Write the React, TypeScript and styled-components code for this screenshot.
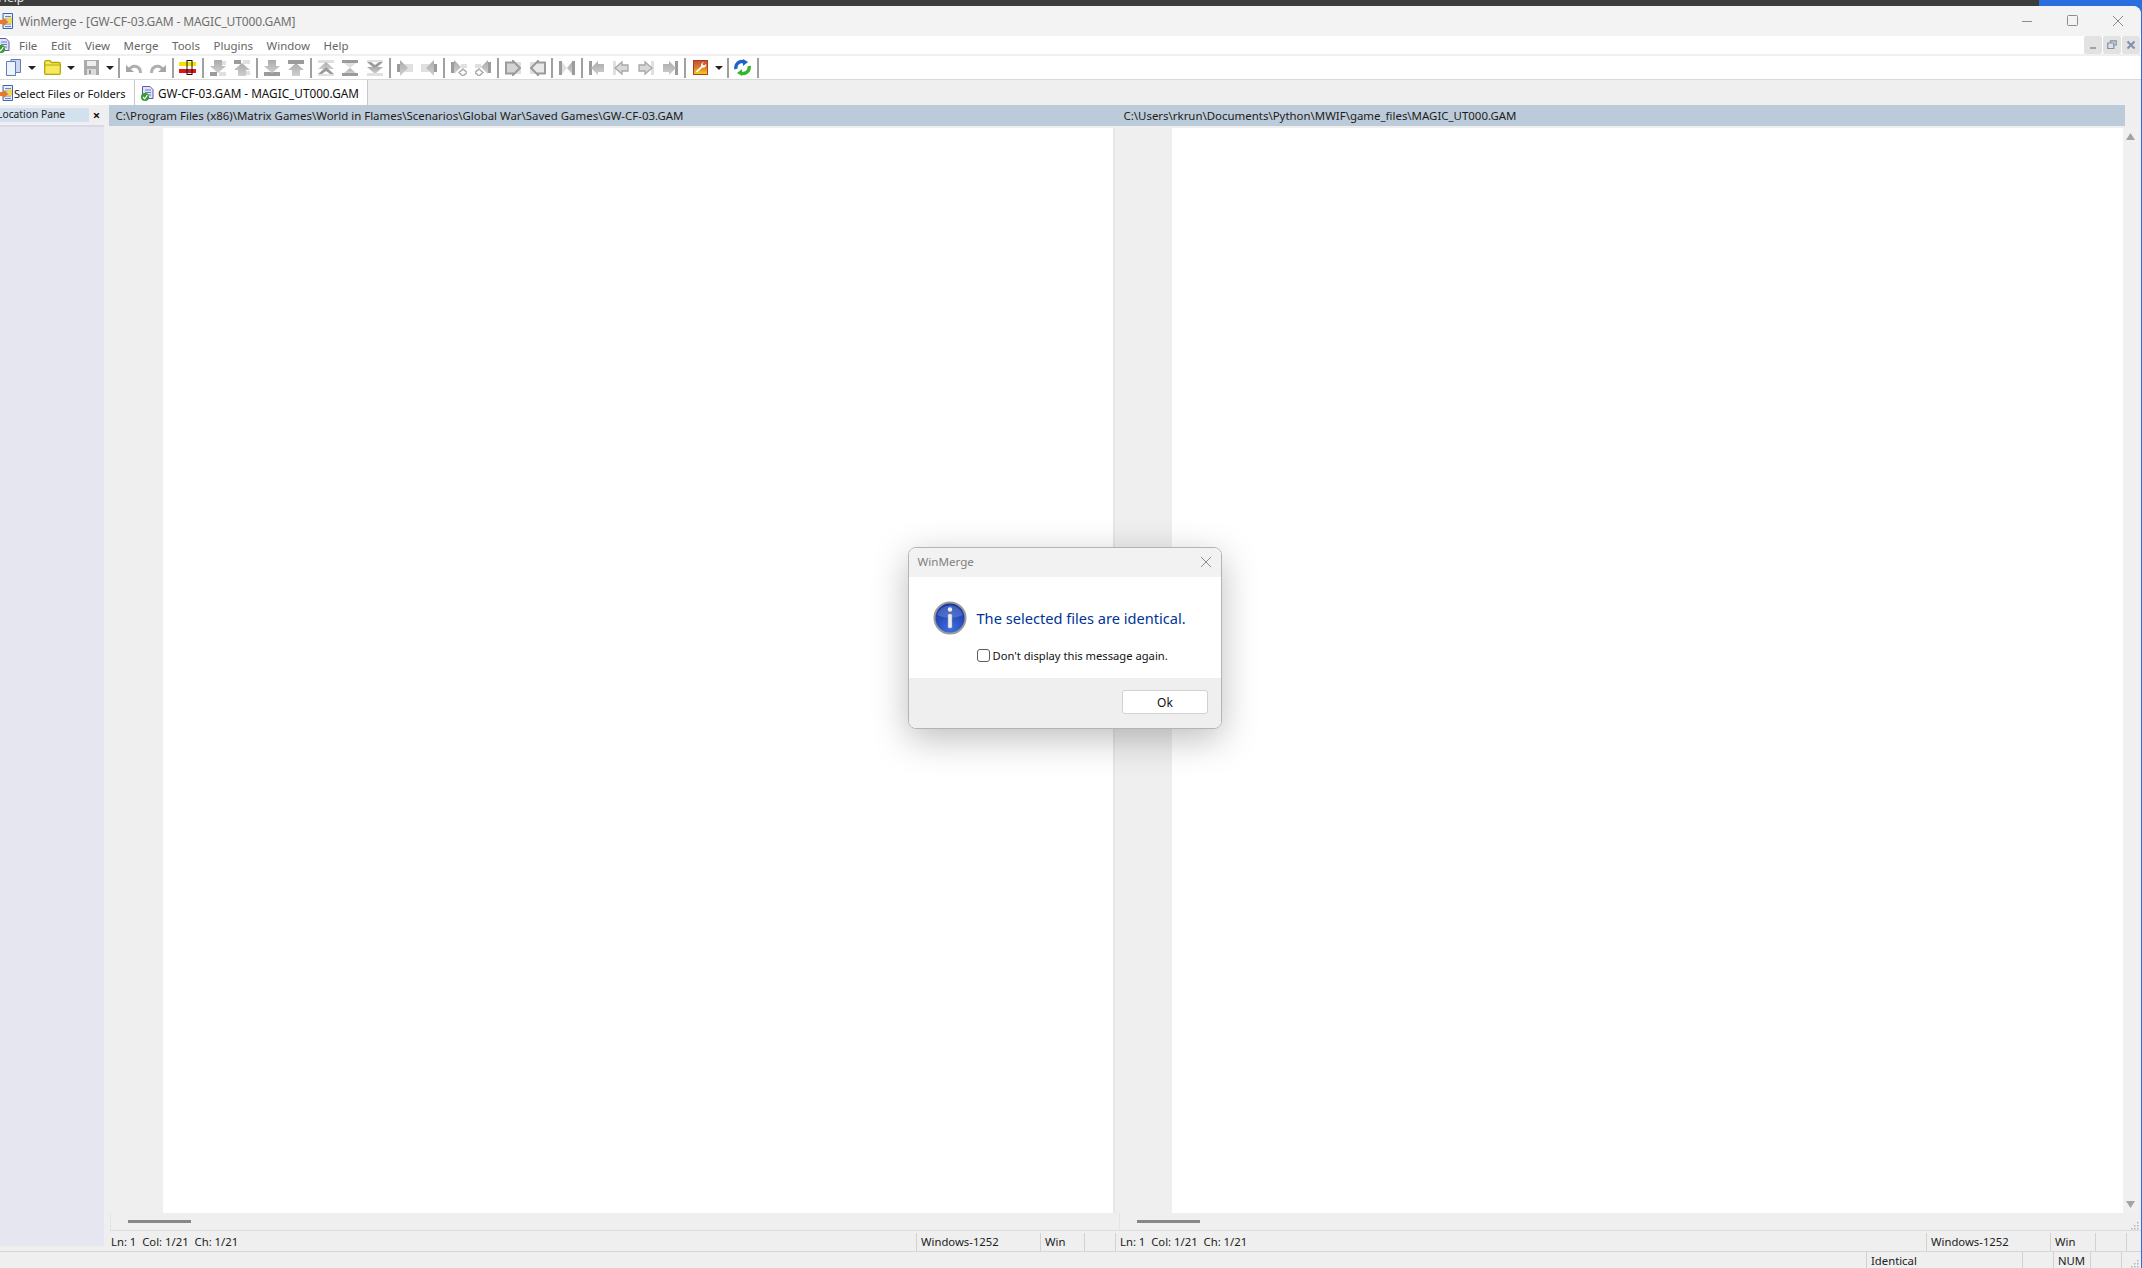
import React, { FC } from 'react';
import styled, { createGlobalStyle } from 'styled-components';

const GlobalStyle = createGlobalStyle`
	html, body {
		margin: 0;
		padding: 0;
	}
	body {
		font-family: 'Noto Sans', 'Open Sans', sans-serif;
		font-size: 11.45px;
		color: #1a1a1a;
	}
`;

const Root = styled.div`
	position: relative;
	width: 2142px;
	height: 1268px;
	overflow: hidden;
	display: flex;
	flex-direction: column;
	background: linear-gradient(90deg, #3d3d3d 2039px, #2a6fe0 2039px);
`;

const TopStrip = styled.div`
	height: 6px;
	flex: none;
	overflow: hidden;
	color: #e8e8e8;
	font-size: 12px;
	line-height: 14px;
`;

const ClippedMenu = styled.div`
	margin-top: -9px;
	margin-left: -2px;
`;

const Window = styled.div`
	flex: 1;
	min-height: 0;
	margin-right: 1px;
	border-top-right-radius: 8px;
	background: #efefef;
	display: flex;
	flex-direction: column;
	overflow: hidden;
`;

const TitleBar = styled.div`
	height: 30px;
	flex: none;
	background: #f3f3f3;
	display: flex;
	align-items: center;
	color: #6f6f6f;
	font-size: 12px;
`;

const TitleText = styled.span`
	margin-left: 6px;
	letter-spacing: -0.12px;
`;

const CaptionButtons = styled.div`
	margin-left: auto;
	display: flex;
	align-items: center;
`;

const CaptionButton = styled.div`
	width: 45.5px;
	height: 30px;
	display: flex;
	align-items: center;
	justify-content: center;
`;

const MenuBar = styled.div`
	height: 18px;
	flex: none;
	background: #fff;
	display: flex;
	align-items: center;
	color: #666;
	border-bottom: 2px solid #f0f0f0;
`;

const MenuItems = styled.div`
	display: flex;
	margin-left: 9px;
	gap: 13.6px;
`;

const MdiButtons = styled.div`
	margin-left: auto;
	display: flex;
	gap: 1px;
	padding-right: 1px;
	align-self: flex-start;
`;

const MdiButton = styled.div`
	width: 18px;
	height: 18px;
	background: #e2e2e2;
	border-radius: 2px;
	display: flex;
	align-items: center;
	justify-content: center;
`;

const Toolbar = styled.div`
	height: 23px;
	flex: none;
	background: #fff;
	border-bottom: 1px solid #d9d9d9;
	display: flex;
	align-items: center;
	padding-left: 1px;
`;

const ToolGroup = styled.div<{ $gap?: number }>`
	display: flex;
	align-items: center;
	gap: ${({ $gap }) => $gap ?? 0.5}px;
`;

const ToolSeparator = styled.div`
	width: 2px;
	height: 20px;
	margin: 0 1.85px;
	background: #a0a0a0;
`;

const ToolIcon = styled.div`
	width: 24px;
	height: 23px;
	display: flex;
	align-items: center;
	justify-content: center;
`;

const DropArrow = styled.div`
	width: 13px;
	height: 23px;
	display: flex;
	align-items: center;
	justify-content: center;
	&::after {
		content: '';
		border-left: 4px solid transparent;
		border-right: 4px solid transparent;
		border-top: 4px solid #222;
	}
`;

const TabBar = styled.div`
	height: 25px;
	flex: none;
	background: #efefef;
	display: flex;
`;

const Tab = styled.div<{ $active?: boolean }>`
	height: 25px;
	box-sizing: border-box;
	background: #fff;
	display: flex;
	align-items: center;
	color: #111;
	white-space: nowrap;
	font-size: ${({ $active }) => ($active ? 11.75 : 11.05)}px;
	border-right: ${({ $active }) => ($active ? '1px solid #c8c8c8' : 'none')};
	border-left: ${({ $active }) => ($active ? '1px solid #c8c8c8' : 'none')};
	width: ${({ $active }) => ($active ? 234 : 134)}px;
	padding-left: ${({ $active }) => ($active ? 5 : 0)}px;
	padding-top: 1px;
	gap: ${({ $active }) => ($active ? 4 : 1)}px;
`;

const Main = styled.div`
	flex: 1;
	min-height: 0;
	display: grid;
	grid-template-columns: 104px 1fr;
`;

const LocationPane = styled.div`
	display: flex;
	flex-direction: column;
	padding-top: 3px;
	padding-bottom: 5px;
`;

const LocationHeader = styled.div`
	height: 14px;
	flex: none;
	display: flex;
	align-items: center;
	justify-content: space-between;
	overflow: hidden;
`;

const LocationLabel = styled.div`
	width: 89px;
	height: 14px;
	background: #d3e0ee;
	color: #222;
	font-size: 10.3px;
	line-height: 13px;
	text-indent: -3px;
	overflow: hidden;
	white-space: nowrap;
`;

const LocationClose = styled.div`
	width: 15px;
	text-align: center;
	font-weight: 700;
	font-size: 13px;
	line-height: 14px;
	color: #111;
`;

const LocationBody = styled.div`
	flex: 1;
	margin-top: 3px;
	background: #e6e6f1;
	border-top: 2px solid #d8d8e6;
`;

const DiffArea = styled.div`
	display: flex;
	flex-direction: column;
	min-width: 0;
`;

const PathBar = styled.div`
	height: 21px;
	flex: none;
	margin-left: 5px;
	width: 2016px;
	background: #bccbd9;
	display: grid;
	grid-template-columns: 1008px 1008px;
	align-items: center;
	color: #1c1c1c;
`;

const PathCell = styled.div`
	padding-left: 6.5px;
	white-space: nowrap;
	overflow: hidden;
`;

const Panes = styled.div`
	flex: 1;
	min-height: 0;
	margin-top: 2px;
	margin-left: 6px;
	display: grid;
	grid-template-columns: 1003px 7px 1003px 15px;
`;

const Pane = styled.div<{ $gutter: number }>`
	display: grid;
	grid-template-columns: ${({ $gutter }) => $gutter}px 1fr;
	min-height: 0;
`;

const Gutter = styled.div`
	background: #efefef;
`;

const Editor = styled.div`
	background: #fff;
`;

const Splitter = styled.div`
	background: #efefef;
	border-left: 2px solid #e6e6e6;
`;

const VScroll = styled.div`
	display: flex;
	flex-direction: column;
	justify-content: space-between;
	align-items: center;
	padding: 5px 0;
	background: #f0f0f0;
`;

const HScrollRow = styled.div`
	height: 17px;
	flex: none;
	margin-left: 6px;
	display: grid;
	grid-template-columns: 1009px 1004px 1fr;
	border-bottom: 1px solid #dcdcdc;
`;

const HScrollTrack = styled.div`
	border-left: 1px solid #e4e4e4;
	display: flex;
	align-items: center;
	padding-left: 17px;
`;

const HScrollThumb = styled.div`
	width: 63px;
	height: 3px;
	background: #888;
`;

const GripCell = styled.div<{ $w?: number }>`
	width: ${({ $w }) => ($w ? `${$w}px` : 'auto')};
	box-sizing: border-box;
	align-self: stretch;
	display: flex;
	justify-content: flex-end;
	align-items: flex-end;
	padding-right: 2px;
`;

const PaneStatus = styled.div`
	height: 19px;
	flex: none;
	margin-top: 1px;
	margin-left: 3px;
	display: flex;
	align-items: center;
	color: #222;
	font-size: 11.3px;
	padding-top: 1px;
	box-sizing: border-box;
`;

const StatusCell = styled.div<{ $w: number }>`
	width: ${({ $w }) => $w}px;
	flex: none;
	box-sizing: border-box;
	height: 18px;
	line-height: 18px;
	padding-left: 4px;
	border-right: 1px solid #d2d2d2;
	white-space: pre;
	overflow: hidden;
`;

const BottomStatus = styled.div`
	height: 17px;
	flex: none;
	border-top: 1px solid #d6d6d6;
	display: flex;
	align-items: center;
	justify-content: flex-end;
	color: #222;
	font-size: 11.3px;
	padding-top: 1px;
	box-sizing: border-box;
`;

const Dialog = styled.div`
	position: absolute;
	left: 908px;
	top: 547px;
	width: 314px;
	height: 182px;
	box-sizing: border-box;
	border: 1px solid #b4b4b4;
	border-radius: 8px;
	overflow: hidden;
	background: #fff;
	box-shadow: 0 10px 36px rgba(0, 0, 0, 0.26);
	display: flex;
	flex-direction: column;
`;

const DialogTitle = styled.div`
	height: 29px;
	flex: none;
	box-sizing: border-box;
	background: #f2f2f2;
	display: flex;
	align-items: center;
	justify-content: space-between;
	padding: 0 9px 2px 8.5px;
	color: #808080;
	font-size: 11.6px;
`;

const DialogBody = styled.div`
	flex: 1;
	display: grid;
	grid-template-columns: 34px 1fr;
	column-gap: 10px;
	padding: 24px 0 0 23.5px;
	grid-template-rows: 34px auto;
	align-content: start;
	align-items: center;
`;

const Message = styled.div`
	font-size: 14.6px;
	color: #003399;
	white-space: nowrap;
`;

const CheckRow = styled.label`
	grid-column: 2;
	display: flex;
	align-items: center;
	gap: 3px;
	margin-top: 13px;
	color: #111;
	font-size: 11.2px;
	white-space: nowrap;
`;

const CheckBox = styled.span`
	width: 11px;
	height: 11px;
	border: 1px solid #5c5c5c;
	border-radius: 3px;
	background: #fff;
	flex: none;
`;

const DialogFooter = styled.div`
	height: 50px;
	flex: none;
	box-sizing: border-box;
	background: #efefef;
	display: flex;
	justify-content: flex-end;
	padding: 12px 13px 0 0;
`;

const OkButton = styled.div`
	width: 86px;
	height: 24px;
	box-sizing: border-box;
	background: #fff;
	border: 1px solid #d2d2d2;
	border-radius: 3px;
	display: flex;
	align-items: center;
	justify-content: center;
	color: #111;
	font-size: 12px;
`;

const Icon = styled.svg`
	display: block;
	flex: none;
`;

const DARK = '#9b9b9b';
const MID = 'url(#grayFill)';
const LIGHT = '#e0e0e0';

const arrows: Record<string, React.ReactNode> = {
	undo: (
		<>
			<path d="M14.5 13 C14.5 6 7 4 3.5 9" fill="none" stroke="#b0b0b0" strokeWidth="3" />
			<path d="M0 5 L8 12 H0 Z" fill="#a6a6a6" />
		</>
	),
	redo: (
		<>
			<path d="M1.5 13 C1.5 6 9 4 12.5 9" fill="none" stroke="#b0b0b0" strokeWidth="3" />
			<path d="M16 5 L8 12 H16 Z" fill="#a6a6a6" />
		</>
	),
	nextDiff: (
		<>
			<rect x="0" y="12" width="7" height="4" fill={DARK} />
			<rect x="9" y="12" width="7" height="4" fill={LIGHT} />
			<rect x="10" y="1" width="6" height="4" fill={LIGHT} />
			<path d="M4 0 H12 V6 H16 L8 13 L0 6 H4 Z" fill={MID} />
		</>
	),
	prevDiff: (
		<>
			<rect x="0" y="0" width="7" height="4" fill={DARK} />
			<rect x="9" y="0" width="7" height="4" fill={LIGHT} />
			<rect x="10" y="11" width="6" height="4" fill={LIGHT} />
			<path d="M8 3 L16 10 H12 V16 H4 V10 H0 Z" fill={MID} />
		</>
	),
	nextConflict: (
		<>
			<rect x="0" y="12" width="16" height="4" fill={DARK} />
			<path d="M4 0 H12 V6 H16 L8 13 L0 6 H4 Z" fill={MID} />
		</>
	),
	prevConflict: (
		<>
			<rect x="0" y="0" width="16" height="4" fill={DARK} />
			<path d="M8 3 L16 10 H12 V16 H4 V10 H0 Z" fill={MID} />
		</>
	),
	first: (
		<>
			<rect x="0" y="0" width="16" height="3" fill={LIGHT} />
			<path d="M8 2 L16 9 H0 Z" fill={MID} />
			<path d="M8 7 L16 14 H12 L8 11 L4 14 H0 Z" fill={DARK} />
			<rect x="0" y="14" width="16" height="2" fill={LIGHT} />
		</>
	),
	current: (
		<>
			<rect x="0" y="0" width="16" height="3" fill={DARK} />
			<path d="M2 3 H14 L8 8 Z" fill={LIGHT} />
			<path d="M8 8 L14 13 H2 Z" fill={MID} />
			<rect x="0" y="13" width="16" height="3" fill={DARK} />
		</>
	),
	last: (
		<>
			<rect x="0" y="0" width="16" height="2" fill={LIGHT} />
			<path d="M0 2 H4 L8 5 L12 2 H16 L8 9 Z" fill={DARK} />
			<path d="M0 7 H16 L8 14 Z" fill={MID} />
			<rect x="0" y="13" width="16" height="3" fill={LIGHT} />
		</>
	),
	copyRight: (
		<>
			<rect x="8" y="4" width="8" height="8" fill={LIGHT} />
			<rect x="0" y="4" width="4" height="8" fill={DARK} />
			<path d="M3 0 L11 8 L3 16 Z" fill={MID} />
		</>
	),
	copyLeft: (
		<>
			<rect x="0" y="4" width="8" height="8" fill={LIGHT} />
			<rect x="12" y="4" width="4" height="8" fill={DARK} />
			<path d="M13 0 L5 8 L13 16 Z" fill={MID} />
		</>
	),
	copyRightNext: (
		<>
			<rect x="0" y="2" width="3" height="11" fill={DARK} />
			<path d="M3 0 L10 7 L3 14 Z" fill={MID} />
			<rect x="10" y="4" width="6" height="4" fill={LIGHT} />
			<path d="M12 9 L16 12.5 L12 16 L8 12.5 Z" fill="none" stroke="#a8a8a8" strokeWidth="1.4" />
		</>
	),
	copyLeftNext: (
		<>
			<rect x="13" y="2" width="3" height="11" fill={DARK} />
			<path d="M13 0 L6 7 L13 14 Z" fill={MID} />
			<rect x="0" y="4" width="6" height="4" fill={LIGHT} />
			<path d="M4 9 L8 12.5 L4 16 L0 12.5 Z" fill="none" stroke="#a8a8a8" strokeWidth="1.4" />
		</>
	),
	allRight: (
		<>
			<rect x="10" y="2" width="6" height="12" fill={LIGHT} />
			<path d="M1 2.5 H8 V1 L15 8 L8 15 V13.5 H1 Z" fill="#d4d4d4" stroke={DARK} strokeWidth="2" />
		</>
	),
	allLeft: (
		<>
			<rect x="0" y="2" width="6" height="12" fill={LIGHT} />
			<path d="M15 2.5 H8 V1 L1 8 L8 15 V13.5 H15 Z" fill="#e8e8e8" stroke={DARK} strokeWidth="2" />
		</>
	),
	join: (
		<>
			<rect x="0" y="1" width="3" height="14" fill={DARK} />
			<rect x="13" y="1" width="3" height="14" fill={DARK} />
			<path d="M3 2 L8 8 L3 14 Z" fill={LIGHT} />
			<path d="M13 2 L8 8 L13 14 Z" fill={MID} />
		</>
	),
	firstFile: (
		<>
			<rect x="0" y="1" width="3" height="14" fill={DARK} />
			<path d="M2 8 L9 1 V4 H15 V12 H9 V15 Z" fill={MID} />
		</>
	),
	prevFile: (
		<>
			<rect x="0" y="1" width="3" height="14" fill={LIGHT} />
			<path d="M2 8 L9 2 V5 H15 V11 H9 V14 Z" fill="#d8d8d8" stroke="#a8a8a8" strokeWidth="1.3" />
		</>
	),
	nextFile: (
		<>
			<rect x="13" y="1" width="3" height="14" fill={LIGHT} />
			<path d="M14 8 L7 2 V5 H1 V11 H7 V14 Z" fill="#d8d8d8" stroke="#a8a8a8" strokeWidth="1.3" />
		</>
	),
	lastFile: (
		<>
			<rect x="13" y="1" width="3" height="14" fill={DARK} />
			<path d="M14 8 L7 1 V4 H1 V12 H7 V15 Z" fill={MID} />
		</>
	),
};

const GrayIcon: FC<{ name: string }> = ({ name }) => (
	<ToolIcon>
		<Icon width="16" height="16" viewBox="0 0 16 16">
			<defs>
				<linearGradient id="grayFill" x1="0" y1="0" x2="0" y2="1">
					<stop offset="0" stopColor="#aaaaaa" />
					<stop offset="1" stopColor="#cfcfcf" />
				</linearGradient>
			</defs>
			{arrows[name]}
		</Icon>
	</ToolIcon>
);

const NewIcon: FC = () => (
	<ToolIcon>
		<Icon width="15" height="17" viewBox="0 0 15 17">
			<path d="M5 .5 H14.5 V13.5 H5 Z" fill="#c9d9f2" stroke="#5d7fb6" />
			<path d="M.5 2.5 H9.5 V16.5 H.5 Z" fill="#eef4fd" stroke="#5d7fb6" />
		</Icon>
	</ToolIcon>
);

const FolderIcon: FC = () => (
	<ToolIcon>
		<Icon width="17" height="15" viewBox="0 0 17 15">
			<path d="M.7 2.2 Q.7 .7 2 .7 H6 L7.5 2.5 H15 Q16.3 2.5 16.3 4 V13 Q16.3 14.3 15 14.3 H2 Q.7 14.3 .7 13 Z" fill="#f6e95f" stroke="#b5a800" strokeWidth="1.3" />
			<path d="M1 5 H16" stroke="#b5a800" />
		</Icon>
	</ToolIcon>
);

const SaveIcon: FC = () => (
	<ToolIcon>
		<Icon width="15" height="15" viewBox="0 0 15 15">
			<rect x="0" y="0" width="15" height="15" fill="#ababab" />
			<rect x="3" y="1" width="9" height="5" fill="#eeeeee" />
			<rect x="3" y="9" width="9" height="6" fill="#dcdcdc" />
			<rect x="5" y="10" width="2" height="4" fill="#9a9a9a" />
		</Icon>
	</ToolIcon>
);

const DiffPaneIcon: FC = () => (
	<ToolIcon>
		<Icon width="17" height="15" viewBox="0 0 17 15">
			<rect x="0" y="2" width="17" height="4" fill="#f2e400" />
			<rect x="0" y="9" width="17" height="4" fill="#e0141c" />
			<rect x="8" y=".5" width="5" height="14" fill="none" stroke="#111" />
		</Icon>
	</ToolIcon>
);

const WrenchIcon: FC = () => (
	<ToolIcon>
		<Icon width="15" height="15" viewBox="0 0 15 15">
			<defs>
				<linearGradient id="optBg" x1="0" y1="0" x2="0" y2="1">
					<stop offset="0" stopColor="#c24c3c" />
					<stop offset="0.5" stopColor="#dd7a2a" />
					<stop offset="1" stopColor="#f7d31c" />
				</linearGradient>
			</defs>
			<rect x=".5" y=".5" width="14" height="14" fill="url(#optBg)" stroke="#a8401f" />
			<path d="M11.2 2.2 a3 3 0 0 0-3 4 L2.8 11.2 l1.4 1.4 5.2-5 a3 3 0 0 0 3.7-3.7 l-1.7 1.6-1.6-.4-.4-1.6z" fill="#fff" />
		</Icon>
	</ToolIcon>
);

const SyncIcon: FC = () => (
	<ToolIcon>
		<Icon width="17" height="17" viewBox="0 0 17 17">
			<path d="M2 10 A6 6 0 0 1 10 3" fill="none" stroke="#1d63c9" strokeWidth="3.4" />
			<path d="M9 0 L14 3 L9 7 Z" fill="#1d63c9" />
			<path d="M15 7 A6 6 0 0 1 7 14" fill="none" stroke="#35b52c" strokeWidth="3.4" />
			<path d="M8 10 L3 14 L8 17 Z" fill="#35b52c" />
		</Icon>
	</ToolIcon>
);

const CompareLogo: FC = () => (
	<Icon width="13" height="16" viewBox="0 0 13 16">
		<path d="M3 .5 H12.5 V15.5 H3 Z" fill="#e6effb" stroke="#3d65b0" />
		<path d="M5 3.5 H11 M5 6 H11 M5 8.5 H11 M5 11 H11 M5 13.5 H11" stroke="#5f86c8" />
		<rect x="7" y="4.5" width="5" height="6" fill="#f5d742" />
		<path d="M3 4.5 L8.5 9 L3 13.5 V11 H0 V7 H3 Z" fill="#e57a2e" />
	</Icon>
);

const DocCheckLogo: FC<{ $clip?: boolean }> = ({ $clip }) => (
	<Icon width={$clip ? 10 : 14} height="15" viewBox={$clip ? '4 0 10 15' : '0 0 14 15'}>
		<path d="M2.5 .5 H10 L13 3.5 V12.5 H2.5 Z" fill="#dfe3f7" stroke="#5b5fa8" />
		<path d="M5 4 H11 M5 6.5 H11 M5 9 H11" stroke="#7478b8" />
		<circle cx="5" cy="11" r="4" fill="#2f9e2c" />
		<path d="M3 11 L4.7 12.8 L7.4 9.2" fill="none" stroke="#fff" strokeWidth="1.2" />
	</Icon>
);

const InfoIcon: FC = () => (
	<Icon width="34" height="34" viewBox="0 0 34 34">
		<defs>
			<radialGradient id="infoBg" cx="0.5" cy="0.85" r="0.85">
				<stop offset="0" stopColor="#3f6fe0" />
				<stop offset="1" stopColor="#14309a" />
			</radialGradient>
		</defs>
		<circle cx="17" cy="17" r="15.5" fill="url(#infoBg)" stroke="#9a9a9a" strokeWidth="2" />
		<path d="M4 14 A13.5 13.5 0 0 1 30 14 Q17 20 4 14 Z" fill="#8fa8ea" opacity="0.35" />
		<circle cx="17" cy="8.5" r="2.2" fill="#f2f2f2" />
		<rect x="15" y="13" width="4" height="14" rx="1" fill="#ededed" stroke="#9aa0b0" strokeWidth="0.5" />
	</Icon>
);

const Grip: FC = () => (
	<Icon width="8" height="8" viewBox="0 0 8 8">
		{[
			[6, 0],
			[3, 3],
			[6, 3],
			[0, 6],
			[3, 6],
			[6, 6],
		].map(([x, y]) => (
			<rect key={`${x}-${y}`} x={x} y={y} width="1.5" height="1.5" fill="#b5b5b5" />
		))}
	</Icon>
);

const ScrollArrow: FC<{ down?: boolean }> = ({ down }) => (
	<Icon width="9" height="7" viewBox="0 0 9 7">
		<path d={down ? 'M0 0 H9 L4.5 7 Z' : 'M0 7 H9 L4.5 0 Z'} fill="#a3a3a3" />
	</Icon>
);

const MainToolbar: FC = () => (
	<Toolbar>
		<ToolGroup $gap={2}>
			<ToolGroup $gap={0}>
				<NewIcon />
				<DropArrow />
			</ToolGroup>
			<ToolGroup $gap={0}>
				<FolderIcon />
				<DropArrow />
			</ToolGroup>
			<ToolGroup $gap={0}>
				<SaveIcon />
				<DropArrow />
			</ToolGroup>
		</ToolGroup>
		<ToolSeparator />
		<ToolGroup>
			<GrayIcon name="undo" />
			<GrayIcon name="redo" />
		</ToolGroup>
		<ToolSeparator />
		<DiffPaneIcon />
		<ToolSeparator />
		<ToolGroup>
			<GrayIcon name="nextDiff" />
			<GrayIcon name="prevDiff" />
		</ToolGroup>
		<ToolSeparator />
		<ToolGroup>
			<GrayIcon name="nextConflict" />
			<GrayIcon name="prevConflict" />
		</ToolGroup>
		<ToolSeparator />
		<ToolGroup>
			<GrayIcon name="first" />
			<GrayIcon name="current" />
			<GrayIcon name="last" />
		</ToolGroup>
		<ToolSeparator />
		<ToolGroup>
			<GrayIcon name="copyRight" />
			<GrayIcon name="copyLeft" />
		</ToolGroup>
		<ToolSeparator />
		<ToolGroup>
			<GrayIcon name="copyRightNext" />
			<GrayIcon name="copyLeftNext" />
		</ToolGroup>
		<ToolSeparator />
		<ToolGroup>
			<GrayIcon name="allRight" />
			<GrayIcon name="allLeft" />
		</ToolGroup>
		<ToolSeparator />
		<GrayIcon name="join" />
		<ToolSeparator />
		<ToolGroup>
			<GrayIcon name="firstFile" />
			<GrayIcon name="prevFile" />
			<GrayIcon name="nextFile" />
			<GrayIcon name="lastFile" />
		</ToolGroup>
		<ToolSeparator />
		<ToolGroup $gap={0}>
			<WrenchIcon />
			<DropArrow />
		</ToolGroup>
		<ToolSeparator />
		<SyncIcon />
		<ToolSeparator />
	</Toolbar>
);

const POSITION = 'Ln: 1  Col: 1/21  Ch: 1/21';

const App: FC = () => (
	<>
		<GlobalStyle />
		<Root>
			<TopStrip>
				<ClippedMenu>Help</ClippedMenu>
			</TopStrip>
			<Window>
				<TitleBar>
					<CompareLogo />
					<TitleText>WinMerge - [GW-CF-03.GAM - MAGIC_UT000.GAM]</TitleText>
					<CaptionButtons>
						<CaptionButton>
							<Icon width="12" height="12" viewBox="0 0 12 12">
								<path d="M1 6.5 H11" stroke="#8c8c8c" />
							</Icon>
						</CaptionButton>
						<CaptionButton>
							<Icon width="12" height="12" viewBox="0 0 12 12">
								<rect x=".5" y=".5" width="10" height="10" rx="1" fill="none" stroke="#8c8c8c" />
							</Icon>
						</CaptionButton>
						<CaptionButton>
							<Icon width="12" height="12" viewBox="0 0 12 12">
								<path d="M1 1 L11 11 M11 1 L1 11" stroke="#8c8c8c" />
							</Icon>
						</CaptionButton>
					</CaptionButtons>
				</TitleBar>
				<MenuBar>
					<DocCheckLogo $clip />
					<MenuItems>
						<span>File</span>
						<span>Edit</span>
						<span>View</span>
						<span>Merge</span>
						<span>Tools</span>
						<span>Plugins</span>
						<span>Window</span>
						<span>Help</span>
					</MenuItems>
					<MdiButtons>
						<MdiButton>
							<Icon width="10" height="10" viewBox="0 0 10 10">
								<rect x="2" y="7" width="6" height="2" fill="#93a3ba" />
							</Icon>
						</MdiButton>
						<MdiButton>
							<Icon width="10" height="10" viewBox="0 0 10 10">
								<path d="M3.5 2.5 V.8 H9.2 V5 H7 M.8 3 H6.8 V8.5 H.8 Z" fill="none" stroke="#7f90aa" strokeWidth="1.2" />
							</Icon>
						</MdiButton>
						<MdiButton>
							<Icon width="10" height="10" viewBox="0 0 10 10">
								<path d="M1.5 1.5 L8.5 8.5 M8.5 1.5 L1.5 8.5" stroke="#7f90aa" strokeWidth="2" />
							</Icon>
						</MdiButton>
					</MdiButtons>
				</MenuBar>
				<MainToolbar />
				<TabBar>
					<Tab>
						<CompareLogo />
						<span>Select Files or Folders</span>
					</Tab>
					<Tab $active>
						<DocCheckLogo />
						<span>GW-CF-03.GAM - MAGIC_UT000.GAM</span>
					</Tab>
				</TabBar>
				<Main>
					<LocationPane>
						<LocationHeader>
							<LocationLabel>Location Pane</LocationLabel>
							<LocationClose>×</LocationClose>
						</LocationHeader>
						<LocationBody />
					</LocationPane>
					<DiffArea>
						<PathBar>
							<PathCell>
								C:\Program Files (x86)\Matrix Games\World in Flames\Scenarios\Global War\Saved Games\GW-CF-03.GAM
							</PathCell>
							<PathCell>C:\Users\rkrun\Documents\Python\MWIF\game_files\MAGIC_UT000.GAM</PathCell>
						</PathBar>
						<Panes>
							<Pane $gutter={53}>
								<Gutter />
								<Editor />
							</Pane>
							<Splitter />
							<Pane $gutter={52}>
								<Gutter />
								<Editor />
							</Pane>
							<VScroll>
								<ScrollArrow />
								<ScrollArrow down />
							</VScroll>
						</Panes>
						<HScrollRow>
							<HScrollTrack>
								<HScrollThumb />
							</HScrollTrack>
							<HScrollTrack>
								<HScrollThumb />
							</HScrollTrack>
							<GripCell>
								<Grip />
							</GripCell>
						</HScrollRow>
						<PaneStatus>
							<StatusCell $w={810}>{POSITION}</StatusCell>
							<StatusCell $w={124}>Windows-1252</StatusCell>
							<StatusCell $w={44}>Win</StatusCell>
							<StatusCell $w={31} />
							<StatusCell $w={811}>{POSITION}</StatusCell>
							<StatusCell $w={124}>Windows-1252</StatusCell>
							<StatusCell $w={45}>Win</StatusCell>
							<StatusCell $w={31} />
						</PaneStatus>
					</DiffArea>
				</Main>
				<BottomStatus>
					<StatusCell $w={109} />
					<StatusCell $w={156}>Identical</StatusCell>
					<StatusCell $w={31} />
					<StatusCell $w={37}>NUM</StatusCell>
					<StatusCell $w={31} />
					<GripCell $w={19}>
						<Grip />
					</GripCell>
				</BottomStatus>
			</Window>
			<Dialog>
				<DialogTitle>
					<span>WinMerge</span>
					<Icon width="12" height="12" viewBox="0 0 12 12">
						<path d="M1 1 L11 11 M11 1 L1 11" stroke="#8c8c8c" />
					</Icon>
				</DialogTitle>
				<DialogBody>
					<InfoIcon />
					<Message>The selected files are identical.</Message>
					<CheckRow>
						<CheckBox />
						Don't display this message again.
					</CheckRow>
				</DialogBody>
				<DialogFooter>
					<OkButton>Ok</OkButton>
				</DialogFooter>
			</Dialog>
		</Root>
	</>
);

export default App;
